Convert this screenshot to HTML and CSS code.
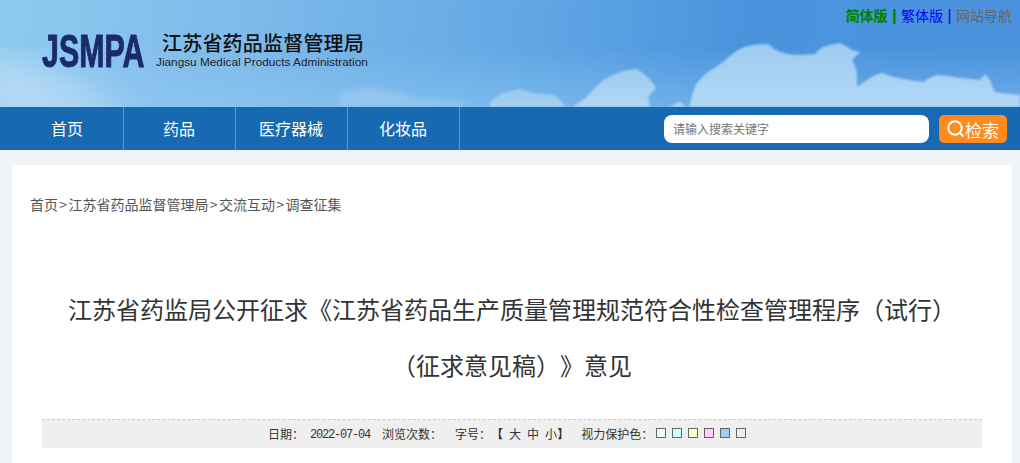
FILE: index.html
```html
<!DOCTYPE html>
<html lang="zh-CN">
    <head>
        <meta charset="utf-8">
        <title>江苏省药品监督管理局</title>
        <link rel="stylesheet" href="styles.css">
    </head>
    <body>
        <div class="banner">
            <!-- sky clouds, sits under the logo and links -->
            <svg class="clouds" width="1020" height="107" viewBox="0 0 1020 107">
                <defs>
                    <filter id="edge"><feGaussianBlur stdDeviation="0.8"/></filter>
                    <filter id="haze"><feGaussianBlur stdDeviation="2.5"/></filter>
                    <filter id="wide"><feGaussianBlur stdDeviation="16"/></filter>
                    <linearGradient id="puff" x1="0" y1="0" x2="0" y2="1">
                        <stop offset="0" stop-color="#9ecbf1"/>
                        <stop offset="1" stop-color="#b2d7f5"/>
                    </linearGradient>
                </defs>
                <path d="M-20 55 Q40 60 80 85 Q110 100 130 125 L-20 125Z" fill="#bcdcf5" opacity="0.8" filter="url(#wide)"/>
                <path d="M340 107 L340 93 Q355 89 370 88 Q385 90 400 93 Q415 99 427 100 Q445 99 463 102 L468 107Z" fill="#a4cff1" opacity="0.55" filter="url(#haze)"/>
                <path d="M490 107 L490 102 Q497 96 503 93 Q512 90 520 89 Q527 91 533 93 Q545 94 553 95 Q560 98 565 107Z" fill="url(#puff)" opacity="0.85" filter="url(#edge)"/>
                <path d="M573 107 Q580 102 587 97 Q595 87 603 80 Q612 75 620 72 Q630 69 637 69 Q640 71 643 73 Q649 78 652 82 Q656 86 655 90 Q651 93 648 97 L650 107Z" fill="url(#puff)" filter="url(#edge)"/>
                <path d="M670 107 Q674 104 680 102 L686 107Z" fill="#b2d7f5" filter="url(#edge)"/>
                <path d="M688 107 L690 105 Q692 92 697 83 Q702 77 708 72 Q716 67 723 62 Q730 55 738 50 Q745 46 752 45 L768 44 Q773 49 780 52 Q790 55 797 55 L815 54 Q818 50 823 47 Q832 44 840 43 Q847 46 852 50 L860 52 L852 60 Q856 66 857 73 L857 87 Q864 82 870 78 Q876 74 882 73 Q892 77 903 79 Q914 81 923 82 Q930 77 937 75 Q950 76 960 78 Q971 79 980 80 L985 74 L990 80 Q992 87 995 92 Q1008 94 1020 95 L1020 107Z" fill="url(#puff)" filter="url(#edge)"/>
            </svg>
            <div class="logo">
                <span class="logo-mark">JSMPA</span>
                <div class="logo-name">
                    <span class="logo-cn">江苏省药品监督管理局</span>
                    <span class="logo-en">Jiangsu Medical Products Administration</span>
                </div>
            </div>
            <div class="top-links">
                <a class="simple">简体版</a><i class="simple">|</i><a class="trad">繁体版</a><i class="trad">|</i><a class="sitemap">网站导航</a>
            </div>
        </div>

        <div class="nav">
            <ul class="menu">
                <li>首页</li>
                <li>药品</li>
                <li>医疗器械</li>
                <li>化妆品</li>
            </ul>
            <div class="search">
                <div class="search-input">请输入搜索关键字</div>
                <div class="search-btn">
                    <svg width="18" height="18" viewBox="0 0 18 18">
                        <circle cx="8" cy="8" r="6.7" fill="none" stroke="#fff" stroke-width="2"/>
                        <path d="M13 13 L16.5 16.5" stroke="#fff" stroke-width="2"/>
                    </svg>
                    <span>检索</span>
                </div>
            </div>
        </div>

        <div class="page">
            <div class="card">
                <div class="crumbs">首页<span class="sep">&gt;</span>江苏省药品监督管理局<span class="sep">&gt;</span>交流互动<span class="sep">&gt;</span>调查征集</div>
                <h1 class="title">江苏省药监局公开征求《江苏省药品生产质量管理规范符合性检查管理程序（试行）<br>（征求意见稿）》意见</h1>
                <div class="meta">
                    <span>日期：</span>
                    <span class="date">2022-07-04</span>
                    <span class="views">浏览次数：</span>
                    <span class="size">字号：<b>【</b><em>大</em><em>中</em><em>小</em><b>】</b></span>
                    <span class="eye">视力保护色：</span>
                    <span class="swatches">
                        <i class="c1"></i><i class="c2"></i><i class="c3"></i><i class="c4"></i><i class="c5"></i><i class="c6"></i>
                    </span>
                </div>
            </div>
        </div>
    </body>
</html>
```

FILE: styles.css
```css
html, body {
    margin: 0;
    padding: 0;
    height: 463px;
    overflow: hidden;
}

body {
    font-family: "Noto Sans CJK SC", "Liberation Sans", sans-serif;
    text-spacing-trim: space-all;
    background: #eef3f7;
    color: #333;
}

.banner {
    position: relative;
    height: 107px;
    display: flex;
    justify-content: space-between;
    background:
        linear-gradient(to top, rgba(150, 205, 245, 0.45), rgba(150, 205, 245, 0) 55%),
        linear-gradient(100deg, #8fcbee 0%, #7db9ea 25%, #63a8e5 50%, #4a94de 72%, #4b92dc 100%);
}

.clouds {
    position: absolute;
    left: 0;
    top: 0;
}

.logo {
    position: relative;
    display: flex;
    padding: 31px 0 0 42px;
}

.logo-mark {
    width: 114px;
    font-family: "Liberation Sans", sans-serif;
    font-size: 46px;
    font-weight: bold;
    line-height: 40px;
    color: #1a2a6c;
    -webkit-text-stroke: 1px #1a2a6c;
    transform: scaleX(0.66);
    transform-origin: left center;
}

.logo-name {
    display: flex;
    flex-direction: column;
}

.logo-cn {
    padding-left: 6px;
    font-size: 20px;
    font-weight: 500;
    letter-spacing: 0.2px;
    line-height: 24px;
    color: #111;
}

.logo-en {
    font-family: "Liberation Sans", sans-serif;
    font-size: 11.8px;
    line-height: 14px;
    color: #222;
    white-space: nowrap;
}

.top-links {
    position: relative;
    padding: 5px 8px 0 0;
    font-size: 14px;
    line-height: 20px;
}

.top-links i {
    font-family: "Liberation Sans", sans-serif;
    font-size: 17px;
    font-style: normal;
    padding: 0 4.3px;
}

.simple {
    color: #008000;
    font-weight: bold;
}

.trad {
    color: #0000ff;
}

.sitemap {
    color: #666;
}

.nav {
    height: 43px;
    display: flex;
    justify-content: space-between;
    background: #1769b1;
}

.menu {
    display: flex;
    margin: 0;
    padding: 0 0 0 12px;
    list-style: none;
}

.menu li {
    width: 110px;
    padding-right: 1px;
    border-right: 1px solid #6b93bd;
    text-align: center;
    font-size: 16px;
    line-height: 43px;
    color: #fff;
}

.search {
    display: flex;
    gap: 10px;
    padding: 8px 13px 0 0;
}

.search-input {
    width: 256px;
    height: 28px;
    padding-left: 9px;
    border-radius: 8px;
    background: #fff;
    font-size: 12px;
    line-height: 28px;
    color: #757575;
}

.search-btn {
    width: 68px;
    height: 28px;
    display: flex;
    align-items: center;
    justify-content: center;
    border-radius: 5px;
    background: #ff8a1e;
    font-size: 17px;
    color: #fff;
}

.page {
    padding: 15px 8px 0 12px;
}

.card {
    height: 300px;
    padding: 0 30px;
    background: #fff;
}

.crumbs {
    padding: 29px 0 0 0;
    margin-left: -12px;
    font-size: 14px;
    line-height: 20px;
    color: #555;
}

.sep {
    padding: 0 1.35px;
}

.title {
    margin: 67px 0 0;
    font-size: 24px;
    font-weight: normal;
    line-height: 56px;
    text-align: center;
    white-space: nowrap;
    color: #333;
}

.meta {
    height: 26px;
    margin-top: 26px;
    padding-bottom: 2px;
    border-top: 1px dashed #ccc;
    background: #efefef;
    display: flex;
    align-items: center;
    padding-left: 226px;
    font-size: 12px;
    color: #333;
}

.date {
    margin-left: 6px;
    margin-top: 4px;
    letter-spacing: -1.2px;
    font-family: "Liberation Mono", monospace;
}

.views {
    margin-left: 12px;
}

.size {
    margin-left: 13px;
}

.size em {
    font-style: normal;
    margin-left: 6px;
}

.size b {
    font-weight: bold;
}

.eye {
    margin-left: 12px;
}

.swatches {
    display: flex;
    gap: 6px;
    margin-left: 3px;
}

.swatches i {
    width: 8px;
    height: 8px;
    border: 1px solid #666;
}

.c1 { background: #e8ffff; }
.c2 { background: #ccffff; }
.c3 { background: #ffffcc; }
.c4 { background: #ffccff; }
.c5 { background: #99ccff; }
.c6 { background: #eee; }
```
